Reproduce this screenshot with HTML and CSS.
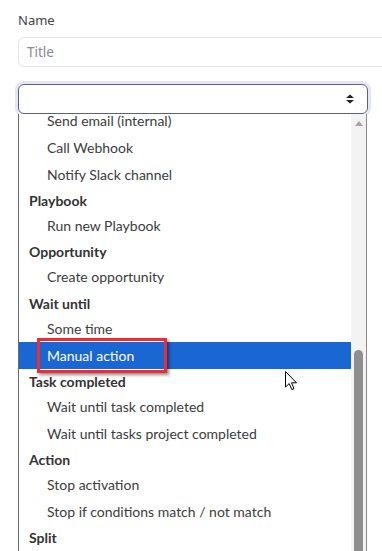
FILE: index.html
```html
<!DOCTYPE html>
<html>
<head>
<meta charset="utf-8">
<link rel="stylesheet" href="styles.css">
</head>
<body>
<div class="page">
  <div class="label">Name</div>
  <div class="input"><span class="placeholder">Title</span></div>
  <div class="select">
    <svg class="caret" width="10" height="10" viewBox="0 0 10 10"><path d="M1 4 L5 0.5 L9 4 Z M1 6 L5 9.5 L9 6 Z" fill="#222"/></svg>
  </div>
  <div class="dropdown">
    <div class="listwrap">
      <div class="list">
        <div class="opt">Send email (internal)</div>
        <div class="opt">Call Webhook</div>
        <div class="opt">Notify Slack channel</div>
        <div class="grp">Playbook</div>
        <div class="opt">Run new Playbook</div>
        <div class="grp">Opportunity</div>
        <div class="opt">Create opportunity</div>
        <div class="grp">Wait until</div>
        <div class="opt">Some time</div>
        <div class="opt selected">Manual action<span class="redbox"></span></div>
        <div class="grp">Task completed</div>
        <div class="opt">Wait until task completed</div>
        <div class="opt">Wait until tasks project completed</div>
        <div class="grp">Action</div>
        <div class="opt">Stop activation</div>
        <div class="opt">Stop if conditions match / not match</div>
        <div class="grp">Split</div>
      </div>
    </div>
    <div class="scrollbar">
      <div class="uparrow"></div>
      <div class="thumb"></div>
    </div>
  </div>
  <svg class="cursor" width="13" height="20" viewBox="0 0 13 20"><path d="M0.5 0.5 L0.5 16 L4.2 12.6 L6.8 18.6 L9 17.6 L6.5 11.8 L11.5 11.8 Z" fill="#fff" stroke="#000" stroke-width="1" stroke-linejoin="miter"/></svg>
</div>
</body>
</html>
```
FILE: styles.css
```css
html, body {
  margin: 0;
  padding: 0;
  background: #fff;
  overflow: hidden;
}
.page {
  position: relative;
  width: 382px;
  height: 551px;
  overflow: hidden;
  padding-left: 18px;
  box-sizing: border-box;
  font-family: Lato, "Open Sans", sans-serif;
}
.label {
  margin-top: 10px;
  height: 20px;
  line-height: 20px;
  font-size: 13px;
  color: #444;
  font-family: "Noto Sans", sans-serif;
}
.input {
  margin-top: 7px;
  width: 400px;
  height: 30px;
  box-sizing: border-box;
  border: 1px solid #e3e4ea;
  border-radius: 6px;
  display: flex;
  align-items: center;
  padding-left: 8px;
}
.placeholder {
  font-family: "Noto Sans", sans-serif;
  font-size: 13.5px;
  color: #8a8a8a;
}
.select {
  margin-top: 17px;
  width: 350px;
  height: 30px;
  box-sizing: border-box;
  border: 1.5px solid #5c6080;
  border-radius: 6px;
  box-shadow: 0 0 0 3px #e3e6f6;
  display: flex;
  align-items: center;
  justify-content: flex-end;
  padding-right: 12px;
}
.caret {
  display: block;
}
.dropdown {
  width: 349px;
  height: 440px;
  box-sizing: border-box;
  border-left: 1px solid #6a6a6a;
  border-right: 1px solid #8a8a8a;
  display: flex;
  background: #fff;
}
.listwrap {
  flex: 1;
  overflow: hidden;
}
.list {
  margin-top: -7.3px;
}
.opt {
  position: relative;
  height: 27px;
  line-height: 27px;
  padding-left: 28px;
  font-size: 14px;
  color: #3c3c3c;
  white-space: nowrap;
}
.grp {
  height: 24.3px;
  line-height: 22px;
  padding-top: 2.3px;
  box-sizing: border-box;
  padding-left: 10px;
  font-size: 14px;
  font-weight: bold;
  color: #333;
  white-space: nowrap;
}
.selected {
  background: #1a66d2;
  color: #fff;
}
.redbox {
  position: absolute;
  left: 18px;
  top: -4px;
  width: 130px;
  height: 35px;
  box-sizing: border-box;
  border: 3.4px solid #ee2c36;
  box-shadow: 2px 2px 3px rgba(0, 0, 0, 0.45);
}
.scrollbar {
  width: 15px;
  background: #f3f3f3;
  display: flex;
  flex-direction: column;
  align-items: center;
}
.uparrow {
  margin-top: 7px;
  width: 0;
  height: 0;
  border-left: 4.5px solid transparent;
  border-right: 4.5px solid transparent;
  border-bottom: 5px solid #a3a3a3;
}
.thumb {
  margin-top: 224px;
  width: 9px;
  flex: 1;
  background: #8e8e8e;
  border-radius: 4.5px 4.5px 0 0;
}
.cursor {
  position: absolute;
  left: 284.5px;
  top: 370.5px;
}
```
